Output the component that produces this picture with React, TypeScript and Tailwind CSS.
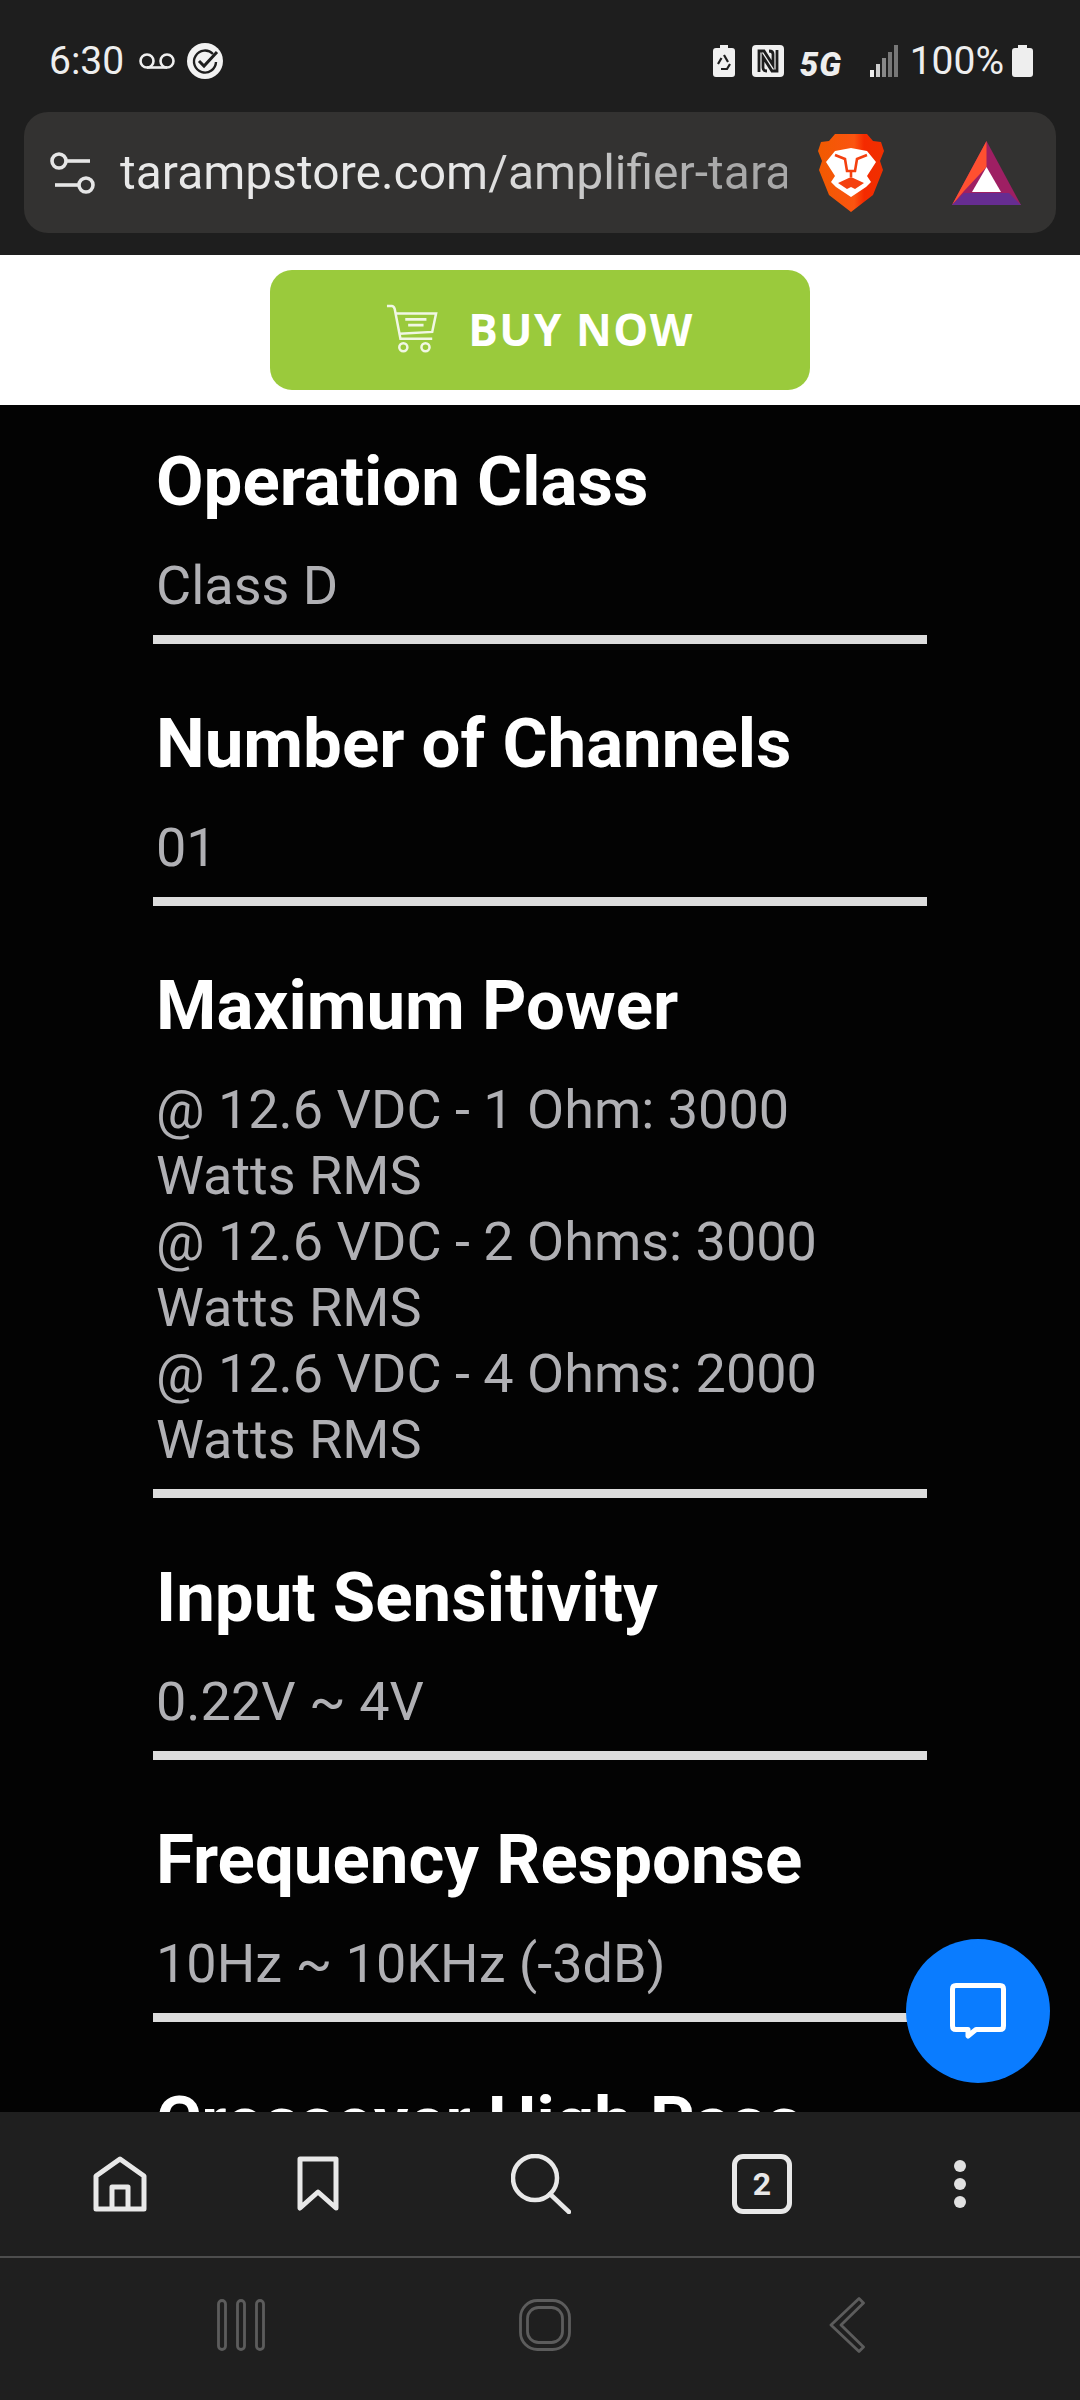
const specs = [
  { title: 'Operation Class', lines: ['Class D'] },
  { title: 'Number of Channels', lines: ['01'] },
  {
    title: 'Maximum Power',
    lines: [
      '@ 12.6 VDC - 1 Ohm: 3000',
      'Watts RMS',
      '@ 12.6 VDC - 2 Ohms: 3000',
      'Watts RMS',
      '@ 12.6 VDC - 4 Ohms: 2000',
      'Watts RMS',
    ],
  },
  { title: 'Input Sensitivity', lines: ['0.22V ~ 4V'] },
  { title: 'Frequency Response', lines: ['10Hz ~ 10KHz (-3dB)'] },
]

function BraveLogo() {
  return (
    <svg width="66" height="78" viewBox="0 0 66 78">
      <defs>
        <linearGradient id="brave" x1="0" x2="1" y1="0" y2="0">
          <stop offset="0" stopColor="#f15a00" />
          <stop offset="0.55" stopColor="#fb5410" />
          <stop offset="0.7" stopColor="#f52a00" />
          <stop offset="1" stopColor="#f03000" />
        </linearGradient>
      </defs>
      <path
        d="M17 0H49L55 7L63 8L66 17L62 27L65 36L55 61L33 78L11 61L1 36L4 27L0 17L3 8L11 7Z"
        fill="url(#brave)"
      />
      <path d="M17 17L33 14L49 17L58 28L49 42L53 48L48 53L33 63L18 53L13 48L17 42L8 28Z" fill="#fff" />
      <path d="M17 21L27 25L29 37H37L39 25L49 21" fill="none" stroke="#f4400f" strokeWidth="2.600" />
      <path d="M33 37V43" fill="none" stroke="#f4400f" strokeWidth="2.600" />
      <path d="M20 49L33 43L46 49L37 55L33 53L29 55Z" fill="#f4400f" />
    </svg>
  )
}

function BatLogo() {
  return (
    <svg width="69" height="64" viewBox="0 0 69 64">
      <path d="M34.5 0L69 64H0Z" fill="#9e1f63" />
      <path d="M34.5 0V26L12 50L0 64Z" fill="#ff5030" />
      <path d="M0 64L12 52H57L69 64Z" fill="#662d91" />
      <path d="M34.5 26L49 51H20Z" fill="#fff" />
    </svg>
  )
}

function CartIcon() {
  return (
    <svg width="52" height="52" viewBox="0 0 54 52" fill="none" stroke="#f1f7e4" strokeWidth="2.6">
      <path d="M1 2H6Q8 2 9 5L15 36H48" />
      <path d="M10 10H52L48 29L14 31" />
      <path d="M20 16H42M23 22H39" strokeWidth="2.8" />
      <circle cx="18" cy="45" r="4.2" />
      <circle cx="41" cy="45" r="4.2" />
    </svg>
  )
}

export default function App() {
  return (
    <div className="flex h-[2400px] w-[1080px] flex-col overflow-hidden bg-black font-['Roboto',sans-serif]">
      {/* browser chrome */}
      <header className="h-[255px] shrink-0 bg-[#1e1e1e] px-6 pt-[41px]">
        <div className="flex h-[40px] items-center pl-[25px] pr-[23px] text-[39px] text-[#eeeeee]">
          <span className="leading-none">6:30</span>
          <svg className="ml-[15px]" width="36" height="16" viewBox="0 0 36 16" fill="none" stroke="#eee" strokeWidth="2.6">
            <circle cx="8" cy="8" r="6.500" />
            <circle cx="28" cy="8" r="6.500" />
            <path d="M8 14.5H28" />
          </svg>
          <svg className="ml-[12px]" width="36" height="36" viewBox="0 0 36 36">
            <circle cx="18" cy="18" r="18" fill="#f2f2f2" />
            <path d="M26 11A11 11 0 1 0 29 19" fill="none" stroke="#1e1e1e" strokeWidth="2.4" />
            <path d="M12 18L17 23L30 9" fill="none" stroke="#1e1e1e" strokeWidth="3" />
          </svg>
          <div className="ml-auto flex items-center">
            <svg width="22" height="32" viewBox="0 0 22 32">
              <path d="M7 0H15V3H19Q22 3 22 6V29Q22 32 19 32H3Q0 32 0 29V6Q0 3 3 3H7Z" fill="#f0f0f0" />
              <path d="M11 10L15 17M17 19L14 24H8M5 19L8.500 13" fill="none" stroke="#1e1e1e" strokeWidth="2.200" />
            </svg>
            <svg className="ml-[17px]" width="32" height="32" viewBox="0 0 32 32">
              <rect width="32" height="32" rx="4" fill="#f0f0f0" />
              <path d="M7 27V6H12L21 20V9Q21 6 17 6M25 5V26H20L11 12V23Q11 26 15 26" fill="none" stroke="#1e1e1e" strokeWidth="2.800" />
            </svg>
            <span className="ml-[16px] mt-[6px] w-[44px] text-[33px] font-black italic leading-none tracking-[1px] text-[#eeeeee]">5G</span>
            <svg className="ml-[26px]" width="28" height="32" viewBox="0 0 28 32">
              <rect x="0" y="25" width="4" height="7" fill="#eee" />
              <rect x="6" y="19" width="4" height="13" fill="#ccc" />
              <rect x="12" y="13" width="4" height="19" fill="#888" />
              <rect x="18" y="7" width="4" height="25" fill="#777" />
              <rect x="24" y="0" width="4" height="32" fill="#777" />
            </svg>
            <span className="ml-[12px] leading-none">100%</span>
            <svg className="ml-[8px]" width="21" height="32" viewBox="0 0 21 32">
              <path d="M6 0H15V3H18Q21 3 21 6V29Q21 32 18 32H3Q0 32 0 29V6Q0 3 3 3H6Z" fill="#eeeeee" />
            </svg>
          </div>
        </div>

        <div className="mt-[31px] flex h-[121px] w-[1032px] items-center rounded-[24px] bg-[#333231] pl-[26px]">
          <svg width="46" height="42" viewBox="0 0 46 42" fill="none" stroke="#e6e6e6" strokeWidth="3.6">
            <circle cx="9" cy="9" r="7" />
            <path d="M16 9H40" />
            <circle cx="36" cy="33" r="7" />
            <path d="M5 33H29" />
          </svg>
          <div className="ml-[24px] w-[667px] overflow-hidden whitespace-nowrap bg-gradient-to-r from-[#e8e8e8] from-50% to-[#a8a8a8] to-90% bg-clip-text text-[48px] leading-[60px] text-transparent">
            tarampstore.com/amplifier-taramp
          </div>
          <div className="ml-[31px]">
            <BraveLogo />
          </div>
          <div className="ml-[68px]">
            <BatLogo />
          </div>
        </div>
      </header>

      {/* sticky buy button */}
      <div className="flex h-[150px] shrink-0 items-center justify-center bg-white">
        <button className="flex h-[120px] w-[540px] items-center justify-center rounded-[22px] bg-[#9aca3c] pb-[2px] font-['Open_Sans',sans-serif] text-[44px] font-bold tracking-[1.5px] text-white">
          <CartIcon />
          <span className="ml-[30px]">BUY NOW</span>
        </button>
      </div>

      {/* page */}
      <main className="relative min-h-0 flex-1 overflow-hidden bg-[#030303] pl-[153px] pt-[38px]">
        {specs.map((spec) => (
          <section key={spec.title} className="mb-[61px] w-[774px] border-b-[9px] border-[#dddddd] pb-[16px]">
            <h2 className="mb-[32px] pl-[3px] text-[69px] font-bold leading-[78px] text-white">{spec.title}</h2>
            {spec.lines.map((line, i) => (
              <p key={i} className="pl-[3px] text-[54px] leading-[66px] text-[#b0b0b4]">
                {line}
              </p>
            ))}
          </section>
        ))}
        <h2 className="pl-[3px] text-[69px] font-bold leading-[78px] text-white">Crossover High Pass</h2>

        <button className="absolute left-[906px] top-[1534px] flex h-[144px] w-[144px] items-center justify-center rounded-full bg-[#0a7cff]">
          <svg width="56" height="56" viewBox="0 0 56 56" fill="none" stroke="#fff" strokeWidth="5">
            <path d="M6 2.500H50Q53.500 2.500 53.500 6V43Q53.500 46.500 50 46.500H26L18 53V46.500H6Q2.500 46.500 2.500 43V6Q2.500 2.500 6 2.500Z" strokeLinejoin="round" />
          </svg>
        </button>
      </main>

      {/* bottom toolbar */}
      <div className="flex h-[146px] shrink-0 items-center border-b-2 border-[#4d4d4d] bg-[#1f1f1f]">
        <svg className="ml-[90px]" width="60" height="60" viewBox="0 0 60 60" fill="none" stroke="#e8e8e8" strokeWidth="5" strokeLinejoin="round">
          <path d="M30 5L54 22V55H6V22Z" />
          <path d="M22 55V33H38V55" />
        </svg>
        <svg className="ml-[138px]" width="60" height="60" viewBox="0 0 60 60" fill="none" stroke="#e8e8e8" strokeWidth="5" strokeLinejoin="round">
          <path d="M12 5H48V54L30 38L12 54Z" />
        </svg>
        <svg className="ml-[163px]" width="60" height="60" viewBox="0 0 60 60" fill="none" stroke="#e8e8e8" strokeWidth="4.500" strokeLinecap="round">
          <circle cx="24" cy="24" r="22" />
          <path d="M39 40L58 58" />
        </svg>
        <div className="ml-[161px] flex h-[60px] w-[60px] items-center justify-center rounded-[11px] border-[5px] border-[#e8e8e8] font-['Roboto',sans-serif] text-[32px] font-bold text-[#e8e8e8]">
          2
        </div>
        <div className="ml-[162px] flex flex-col gap-[6px]">
          <span className="h-[12px] w-[12px] rounded-full bg-[#e0e0e0]" />
          <span className="h-[12px] w-[12px] rounded-full bg-[#e0e0e0]" />
          <span className="h-[12px] w-[12px] rounded-full bg-[#e0e0e0]" />
        </div>
      </div>

      {/* android nav */}
      <div className="flex h-[142px] shrink-0 items-center bg-[#1f1f1f] pb-[8px]">
        <svg className="ml-[217px]" width="48" height="52" viewBox="0 0 48 52" fill="none" stroke="#5c5c5c" strokeWidth="2.800">
          <rect x="1.500" y="1.500" width="7" height="49" rx="3.500" />
          <rect x="20.500" y="1.500" width="7" height="49" rx="3.500" />
          <rect x="39.500" y="1.500" width="7" height="49" rx="3.500" />
        </svg>
        <svg className="ml-[254px]" width="52" height="52" viewBox="0 0 52 52" fill="none" stroke="#5c5c5c" strokeWidth="2.800">
          <rect x="1.500" y="1.500" width="49" height="49" rx="17" />
          <rect x="8.500" y="8.500" width="35" height="35" rx="11" />
        </svg>
        <svg className="ml-[258px]" width="36" height="56" viewBox="0 0 36 56" fill="none" stroke="#5c5c5c" strokeWidth="2.800" strokeLinejoin="round">
          <path d="M30 1.500L34.500 6L12 28L34.500 50L30 54.500L2 28Z" />
        </svg>
      </div>
    </div>
  )
}
